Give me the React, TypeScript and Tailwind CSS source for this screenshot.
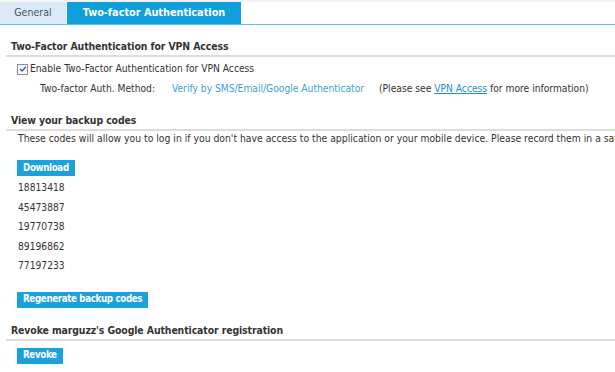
import React from 'react';

const codes = ['18813418', '45473887', '19770738', '89196862', '77197233'];

function Btn({ children }: { children: React.ReactNode }) {
  return (
    <div className="flex pl-[17px]">
      <button className="flex h-[16px] items-center bg-[#1ba1dd] px-[6px] text-[9.7px] font-bold tracking-[-0.35px] text-white">
        {children}
      </button>
    </div>
  );
}

function Heading({ children }: { children: React.ReactNode }) {
  return (
    <div className="ml-[6px] border-b-2 border-[#dcdcdc] pb-[2px] pl-[5px] text-[10.4px] font-bold leading-[14px] tracking-[-0.1px] text-[#333]">
      {children}
    </div>
  );
}

export default function App() {
  return (
    <div className="h-[372px] w-[615px] overflow-hidden bg-white text-[10.2px] text-[#333] [font-family:'DejaVu_Sans_Condensed','DejaVu_Sans',sans-serif]">
      {/* Tabs */}
      <div className="border-t-2 border-[#f2f2f2]">
        <div className="flex h-[23px] items-stretch border-b border-[#55c1ec]">
          <div className="flex w-[66px] items-center justify-center bg-[#dbeaf6] text-[10.6px] text-[#4a5560]">General</div>
          <div className="ml-[1px] flex w-[174px] items-center justify-center bg-[#0fa0dc] text-[10.8px] font-bold text-white">
            Two-factor Authentication
          </div>
        </div>
      </div>

      <div className="mt-[14px]">
        <Heading>Two-Factor Authentication for VPN Access</Heading>
      </div>

      <div className="mt-[5px] flex h-[14px] items-center pl-[17px]">
        <span className="flex h-[11px] w-[11px] items-center justify-center border border-[#8e8f8f] bg-gradient-to-br from-[#eef2f6] to-[#fdfdfd]">
          <svg viewBox="0 0 10 10" className="h-[8px] w-[8px]">
            <path d="M1.5 5 L4 7.6 L8.5 2" stroke="#2f4fa0" strokeWidth="1.6" fill="none" />
          </svg>
        </span>
        <span className="ml-[2px]">Enable Two-Factor Authentication for VPN Access</span>
      </div>

      <div className="mt-[6px] flex h-[14px] items-center whitespace-nowrap">
        <span className="ml-[40px] w-[132px]">Two-factor Auth. Method:</span>
        <span className="w-[207px] text-[#3a9fd8]">Verify by SMS/Email/Google Authenticator</span>
        <span>
          (Please see <span className="text-[#1a8fd0] underline">VPN Access</span> for more information)
        </span>
      </div>

      <div className="mt-[17px]">
        <Heading>View your backup codes</Heading>
      </div>
      <div className="mt-[1px] flex h-[14px] items-center whitespace-nowrap pl-[18px] text-[10.3px]">
        These codes will allow you to log in if you don't have access to the application or your mobile device. Please record them in a safe place.
      </div>

      <div className="mt-[14px]">
        <Btn>Download</Btn>
      </div>

      <div className="mt-[2px] flex flex-col pl-[18px]">
        {codes.map((c) => (
          <div key={c} className="flex h-[19.5px] items-center">
            {c}
          </div>
        ))}
      </div>

      <div className="mt-[16px]">
        <Btn>Regenerate backup codes</Btn>
      </div>

      <div className="mt-[15px]">
        <Heading>Revoke marguzz's Google Authenticator registration</Heading>
      </div>
      <div className="mt-[7px]">
        <Btn>Revoke</Btn>
      </div>
    </div>
  );
}
